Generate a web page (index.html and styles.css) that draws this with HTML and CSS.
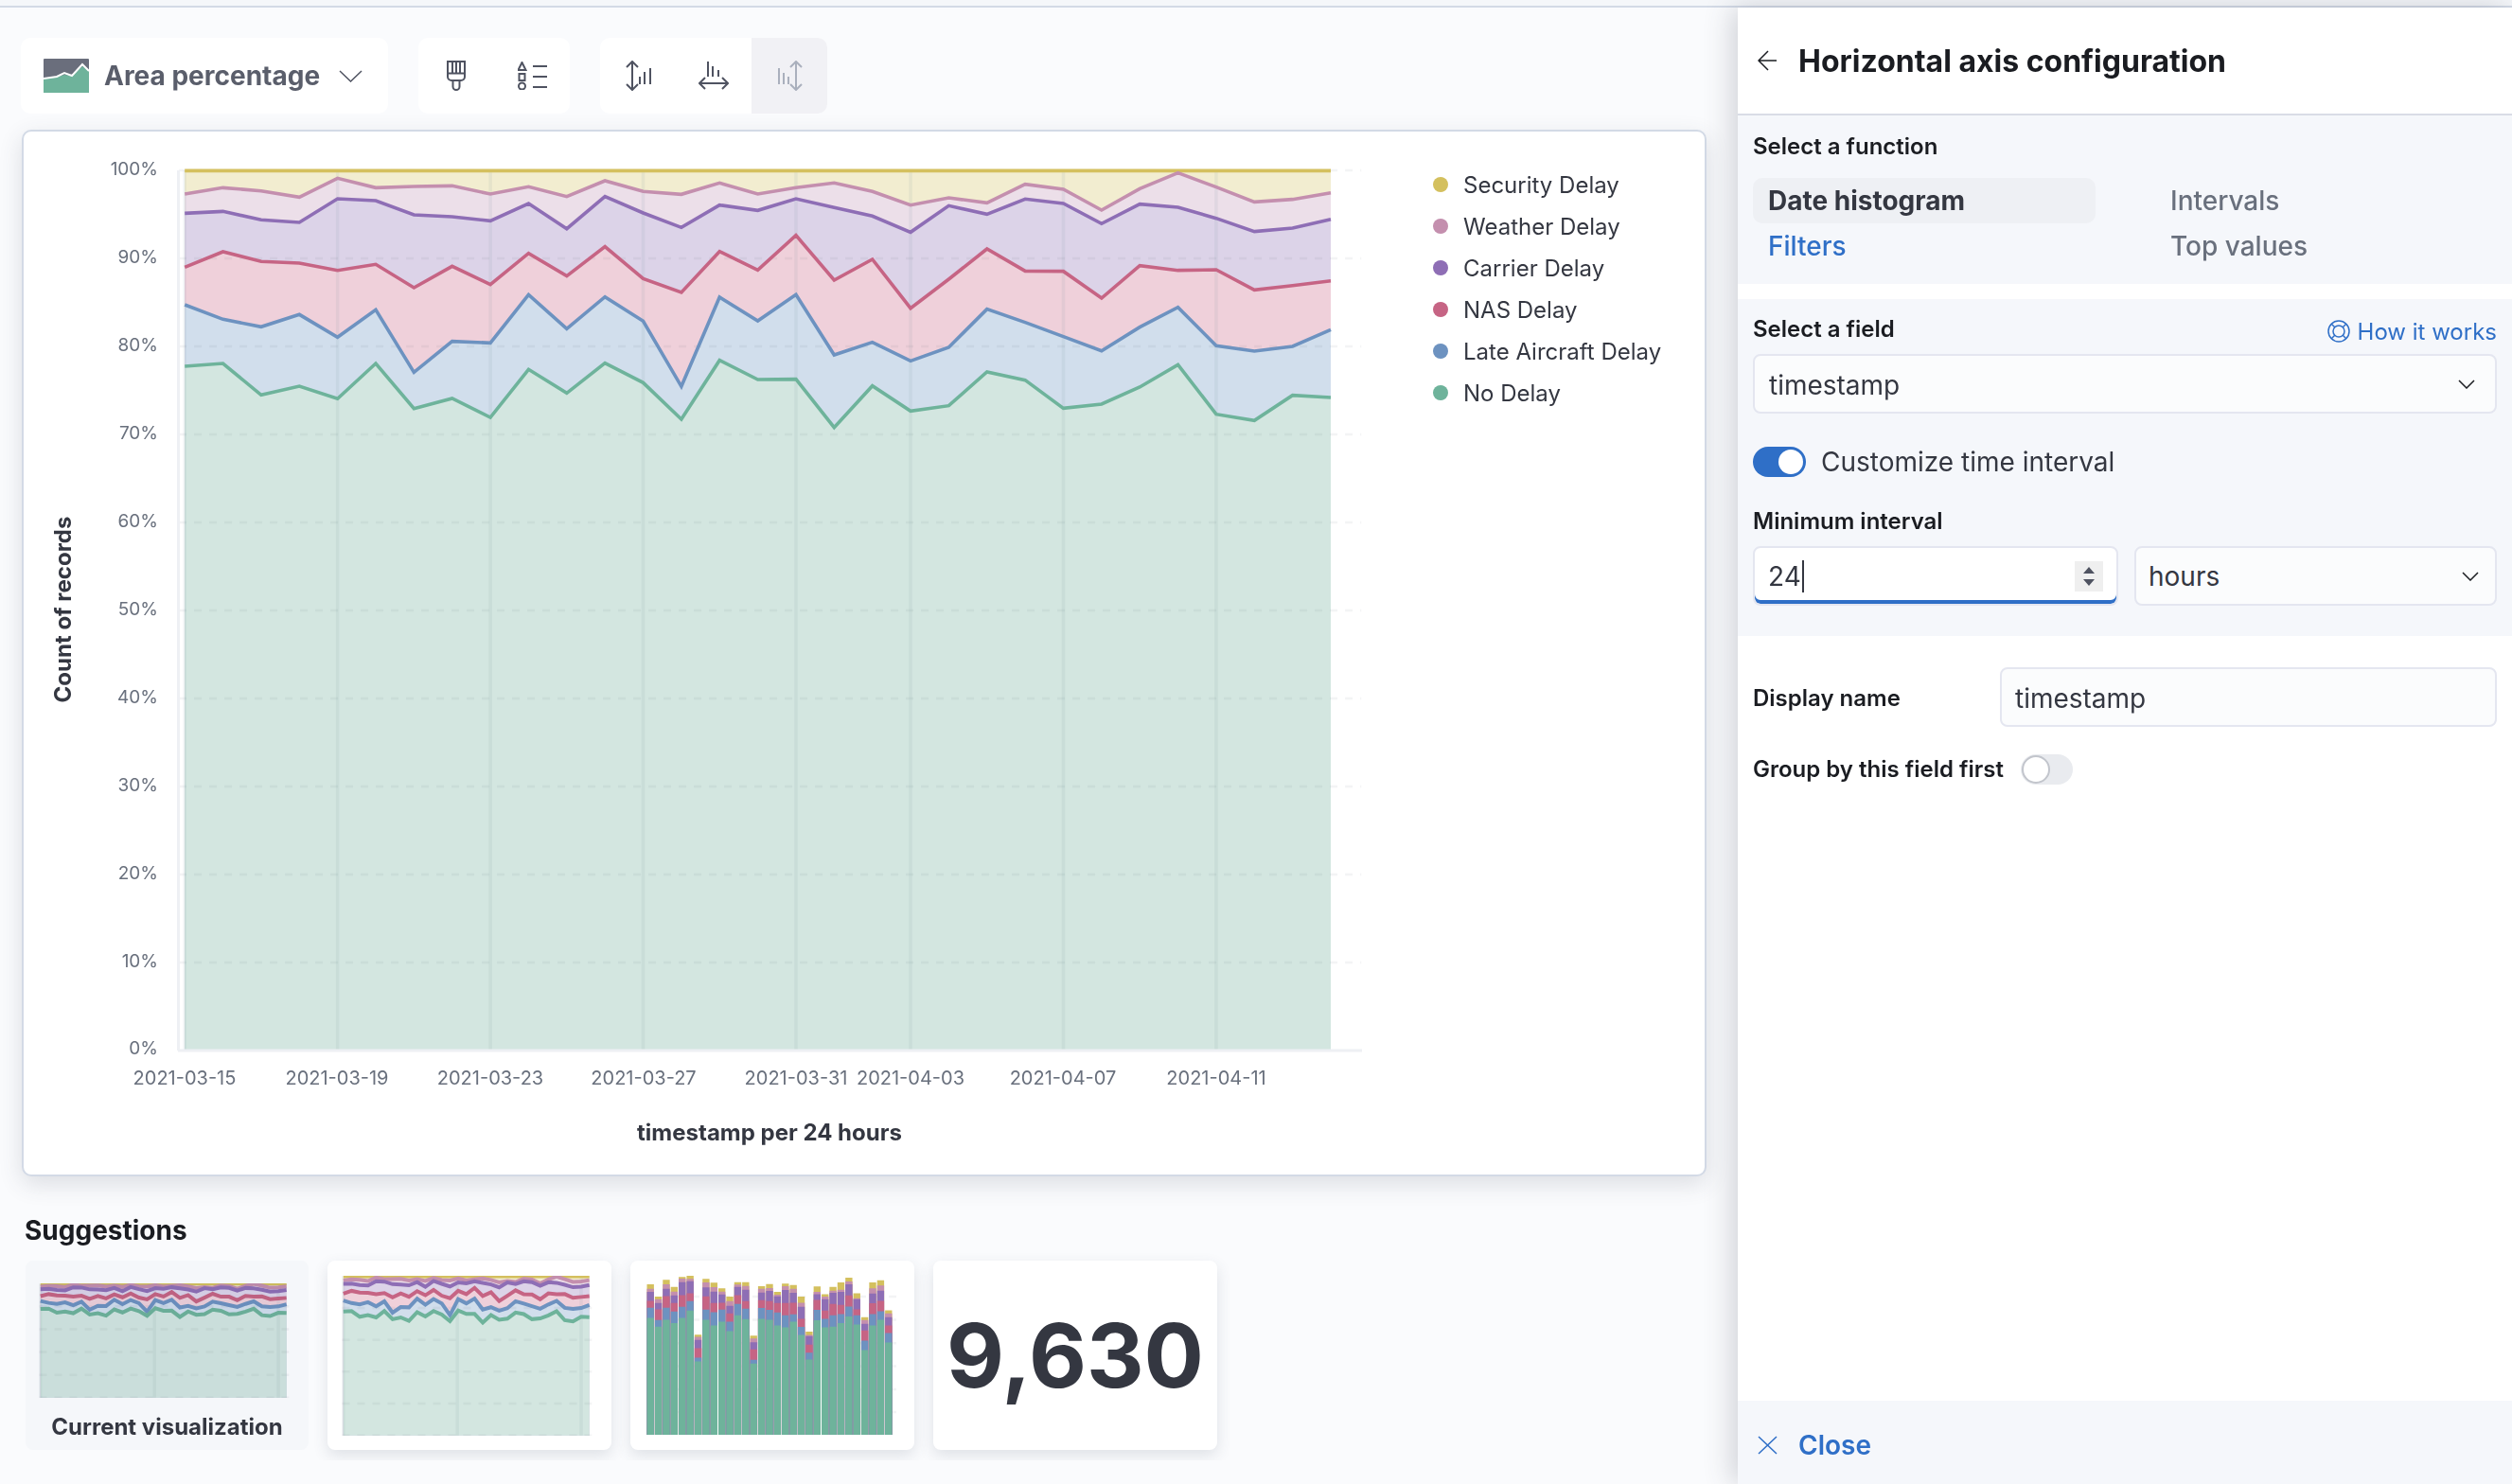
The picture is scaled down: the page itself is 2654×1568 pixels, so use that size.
FILE: index.html
```html
<!DOCTYPE html>
<html lang="en">
<head>
<meta charset="utf-8">
<title>Horizontal axis configuration</title>
<link rel="stylesheet" href="styles.css">
</head>
<body>
<svg class="defs" width="0" height="0" aria-hidden="true">
  <symbol id="fills" viewBox="187 178 1253 934" preserveAspectRatio="none">
    <g transform="translate(195.2 160) scale(40.36 0.33333)">
      <polygon class="a-yellow" points="0,60 30,60 30,2850 0,2850"/>
      <polygon class="a-pink" points="0,135 1,115 2,125 3,145 4,85 5,115 6,111 7,109 8,135 9,112 10,143 11,93 12,127 13,136 14,100 15,135 16,115 17,100 18,127 19,170 20,147 21,163 22,104 23,120 24,186 25,118 26,68 27,113 28,160 29,152 30,131 30,2850 0,2850"/>
      <polygon class="a-purple" points="0,196 1,190 2,217 3,225 4,150 5,156 6,201 7,207 8,220 9,165 10,245 11,143 12,195 13,241 14,170 15,187 16,150 17,178 18,205 19,256 20,172 21,199 22,151 23,165 24,229 25,167 26,177 27,212 28,254 29,243 30,215 30,2850 0,2850"/>
      <polygon class="a-red" points="0,367 1,318 2,349 3,354 4,377 5,358 6,432 7,364 8,422 9,323 10,395 11,302 12,403 13,447 14,317 15,376 16,266 17,408 18,342 19,497 20,405 21,309 22,379 23,380 24,465 25,362 26,377 27,375 28,439 29,425 30,410 30,2850 0,2850"/>
      <polygon class="a-blue" points="0,486 1,532 2,556 3,517 4,589 5,502 6,700 7,602 8,607 9,454 10,562 11,461 12,538 13,745 14,462 15,537 16,454 17,645 18,605 19,664 20,621 21,500 22,542 23,587 24,632 25,557 26,494 27,616 28,633 29,618 30,565 30,2850 0,2850"/>
      <polygon class="a-green" points="0,681 1,672 2,772 3,744 4,784 5,672 6,815 7,783 8,843 9,691 10,766 11,671 12,733 13,849 14,662 15,723 16,722 17,875 18,743 19,823 20,806 21,699 22,725 23,814 24,801 25,747 26,676 27,833 28,853 29,773 30,780 30,2850 0,2850"/>
    </g>
  </symbol>
  <symbol id="grid-main" viewBox="187 178 1253 934" preserveAspectRatio="none">
    <g transform="translate(195.2 160) scale(40.36 0.33333)">
      <path class="grid" d="M-.15 60H30.8M-.15 339H30.8M-.15 618H30.8M-.15 897H30.8M-.15 1176H30.8M-.15 1455H30.8M-.15 1734H30.8M-.15 2013H30.8M-.15 2292H30.8M-.15 2571H30.8"/>
      <path class="tick" d="M0 60V2850M4 60V2850M8 60V2850M12 60V2850M16 60V2850M19 60V2850M23 60V2850M27 60V2850"/>
    </g>
  </symbol>
  <symbol id="grid-mini" viewBox="187 178 1253 934" preserveAspectRatio="none">
    <g transform="translate(195.2 160) scale(40.36 0.33333)">
      <path class="grid" d="M-.15 618H30.3M-.15 1176H30.3M-.15 1734H30.3M-.15 2292H30.3M-.15 2850H30.3"/>
      <path class="tick" d="M0 60V2850M13.900 60V2850M29 60V2850"/>
    </g>
  </symbol>
  <symbol id="lines" viewBox="187 178 1253 934" preserveAspectRatio="none">
    <g transform="translate(195.2 160) scale(40.36 0.33333)">
      <polyline class="line l-yellow" points="0,61 30,61"/>
      <polyline class="line l-pink" points="0,135 1,115 2,125 3,145 4,85 5,115 6,111 7,109 8,135 9,112 10,143 11,93 12,127 13,136 14,100 15,135 16,115 17,100 18,127 19,170 20,147 21,163 22,104 23,120 24,186 25,118 26,68 27,113 28,160 29,152 30,131"/>
      <polyline class="line l-purple" points="0,196 1,190 2,217 3,225 4,150 5,156 6,201 7,207 8,220 9,165 10,245 11,143 12,195 13,241 14,170 15,187 16,150 17,178 18,205 19,256 20,172 21,199 22,151 23,165 24,229 25,167 26,177 27,212 28,254 29,243 30,215"/>
      <polyline class="line l-red" points="0,367 1,318 2,349 3,354 4,377 5,358 6,432 7,364 8,422 9,323 10,395 11,302 12,403 13,447 14,317 15,376 16,266 17,408 18,342 19,497 20,405 21,309 22,379 23,380 24,465 25,362 26,377 27,375 28,439 29,425 30,410"/>
      <polyline class="line l-blue" points="0,486 1,532 2,556 3,517 4,589 5,502 6,700 7,602 8,607 9,454 10,562 11,461 12,538 13,745 14,462 15,537 16,454 17,645 18,605 19,664 20,621 21,500 22,542 23,587 24,632 25,557 26,494 27,616 28,633 29,618 30,565"/>
      <polyline class="line l-green" points="0,681 1,672 2,772 3,744 4,784 5,672 6,815 7,783 8,843 9,691 10,766 11,671 12,733 13,849 14,662 15,723 16,722 17,875 18,743 19,823 20,806 21,699 22,725 23,814 24,801 25,747 26,676 27,833 28,853 29,773 30,780"/>
    </g>
  </symbol>
  <symbol id="chev" viewBox="0 0 18 10"><path class="ic" d="M1 1l8 8 8-8"/></symbol>
</svg>

<div class="topbar"></div>
<div class="app">
  <main class="left">
    <div class="toolbar">
      <div class="chip chip-type">
        <svg class="type-icon" width="48" height="36" viewBox="0 0 48 36">
          <rect width="48" height="36" rx="1" fill="#6a6e7c"/>
          <polygon points="0,21 14,19 22,17 30,18 41,8 48,13 48,36 0,36" fill="#6eb39b"/>
          <polyline points="0,21 14,19 22,15 30,18 41,6 48,13" fill="none" stroke="#fff" stroke-width="2"/>
        </svg>
        <span class="type-label">Area percentage</span>
        <svg class="type-chev" width="25" height="13" viewBox="0 0 25 13"><path d="M1 1l11.500 11L24 1" fill="none" stroke="#4f5361" stroke-width="1.500"/></svg>
      </div>
      <div class="chip">
        <div class="tool">
          <svg width="20" height="32" viewBox="0 0 20 32"><path class="tool-ic" d="M1 1h18v16a4 4 0 0 1-4 4H5a4 4 0 0 1-4-4zM1 13.500h18M6 1v12M10 1v12M14 1v12M6.500 21v6.500a3.500 3.500 0 0 0 7 0V21"/></svg>
        </div>
        <div class="tool">
          <svg width="31" height="30" viewBox="0 0 31 30"><path class="tool-ic" d="M4.500 1L8.500 9h-8zM1.500 13h6v7h-6zM16 5h15M16 16h15M16 27h15"/><ellipse class="tool-ic" cx="4.500" cy="26" rx="3.500" ry="3.500"/></svg>
        </div>
      </div>
      <div class="chip">
        <div class="tool">
          <svg width="27" height="32" viewBox="0 0 27 32"><path class="tool-ic" d="M7 1v30M1 7l6-6 6 6M1 25l6 6 6-6M15 17v8M20 12v13M26 8v17"/></svg>
        </div>
        <div class="tool">
          <svg width="32" height="30" viewBox="0 0 32 30"><path class="tool-ic" d="M10 0v16M15 5v11M21 9v7M1 23h30M7 17l-6 6 6 6M25 17l6 6-6 6"/></svg>
        </div>
        <div class="tool tool-off">
          <svg width="27" height="32" viewBox="0 0 27 32"><path class="tool-ic" d="M20 1v30M14 7l6-6 6 6M14 25l6 6 6-6M2 8v17M7 13v12M12 17v8"/></svg>
        </div>
      </div>
    </div>

    <section class="card">
      <svg class="chart" width="1465" height="1101" viewBox="25 139 1465 1101">
        <use href="#fills" x="187" y="178" width="1253" height="934"/>
        <use href="#grid-main" x="187" y="178" width="1253" height="934"/>
        <use href="#lines" x="187" y="178" width="1253" height="934"/>
        <path class="axis" d="M188.500 180V1110M188 1110H1439"/>
        <g class="ylab">
          <text x="167" y="178.500">100%</text><text x="167" y="271.500">90%</text><text x="167" y="364.500">80%</text><text x="167" y="457.500">70%</text><text x="167" y="550.500">60%</text><text x="167" y="643.500">50%</text><text x="167" y="736.500">40%</text><text x="167" y="829.500">30%</text><text x="167" y="922.500">20%</text><text x="167" y="1015.500">10%</text><text x="167" y="1107">0%</text>
        </g>
        <g class="xlab">
          <text x="195" y="1139">2021-03-15</text><text x="356" y="1139">2021-03-19</text><text x="518" y="1139">2021-03-23</text><text x="680" y="1139">2021-03-27</text><text x="841" y="1139">2021-03-31</text><text x="962" y="1139">2021-04-03</text><text x="1123" y="1139">2021-04-07</text><text x="1285" y="1139">2021-04-11</text>
        </g>
        <text class="axis-title" x="813" y="1196">timestamp per 24 hours</text>
        <text class="axis-title" x="66" y="644" transform="rotate(-90 66 644)">Count of records</text>
      </svg>
      <ul class="legend">
        <li><i class="dot d-yellow"></i>Security Delay</li>
        <li><i class="dot d-pink"></i>Weather Delay</li>
        <li><i class="dot d-purple"></i>Carrier Delay</li>
        <li><i class="dot d-red"></i>NAS Delay</li>
        <li><i class="dot d-blue"></i>Late Aircraft Delay</li>
        <li><i class="dot d-green"></i>No Delay</li>
      </ul>
    </section>

    <h2 class="sug-title">Suggestions</h2>
    <div class="sug-row">
      <div class="sug sug-current">
        <svg class="mini mini-a" width="269" height="121" viewBox="0 0 269 121" preserveAspectRatio="none"><use href="#fills" width="269" height="121"/><use href="#grid-mini" width="269" height="121"/><use href="#lines" width="269" height="121"/></svg>
        <div class="sug-cap">Current visualization</div>
      </div>
      <div class="sug">
        <svg class="mini mini-b" width="269" height="169" viewBox="0 0 269 169" preserveAspectRatio="none"><use href="#fills" width="269" height="169"/><use href="#grid-mini" width="269" height="169"/><use href="#lines" width="269" height="169"/></svg>
      </div>
      <div class="sug">
        <svg class="mini mini-c" width="260" height="171" viewBox="0 0 31 512" preserveAspectRatio="none">
          <path class="grid" d="M0 75H31.600M0 148H31.600M0 222H31.600M0 295H31.600M0 368H31.600M0 440H31.600"/>
          <path class="bar s-yellow" d="M.5 36V512M1.500 75V512M2.500 22V512M3.500 44V512M4.500 13V512M5.500 9V512M6.500 195V512M7.500 19V512M8.500 31V512M9.500 49V512M10.500 75V512M11.500 29V512M12.500 29V512M13.500 198V512M14.500 42V512M15.500 35V512M16.500 60V512M17.500 34V512M18.500 38V512M19.500 75V512M20.500 186V512M21.500 43V512M22.500 67V512M23.500 44V512M24.500 30V512M25.500 15V512M26.500 64V512M27.500 140V512M28.500 30V512M29.500 23V512M30.500 118V512"/>
          <path class="bar s-pink" d="M.5 50V512M1.500 83V512M2.500 36V512M3.500 59V512M4.500 18V512M5.500 19V512M6.500 202V512M7.500 30V512M8.500 45V512M9.500 59V512M10.500 89V512M11.500 37V512M12.500 41V512M13.500 207V512M14.500 50V512M15.500 48V512M16.500 69V512M17.500 42V512M18.500 50V512M19.500 94V512M20.500 196V512M21.500 60V512M22.500 75V512M23.500 56V512M24.500 53V512M25.500 27V512M26.500 80V512M27.500 149V512M28.500 49V512M29.500 40V512M30.500 128V512"/>
          <path class="bar s-purple" d="M.5 60V512M1.500 95V512M2.500 50V512M3.500 71V512M4.500 29V512M5.500 26V512M6.500 212V512M7.500 46V512M8.500 59V512M9.500 68V512M10.500 104V512M11.500 44V512M12.500 53V512M13.500 219V512M14.500 62V512M15.500 57V512M16.500 74V512M17.500 54V512M18.500 63V512M19.500 107V512M20.500 200V512M21.500 67V512M22.500 83V512M23.500 63V512M24.500 60V512M25.500 36V512M26.500 83V512M27.500 161V512M28.500 65V512M29.500 56V512M30.500 140V512"/>
          <path class="bar s-red" d="M.5 88V512M1.500 115V512M2.500 73V512M3.500 95V512M4.500 70V512M5.500 64V512M6.500 238V512M7.500 74V512M8.500 95V512M9.500 94V512M10.500 128V512M11.500 70V512M12.500 89V512M13.500 242V512M14.500 86V512M15.500 89V512M16.500 95V512M17.500 95V512M18.500 94V512M19.500 145V512M20.500 227V512M21.500 85V512M22.500 119V512M23.500 98V512M24.500 101V512M25.500 71V512M26.500 115V512M27.500 182V512M28.500 96V512M29.500 88V512M30.500 166V512"/>
          <path class="bar s-blue" d="M.5 110V512M1.500 149V512M2.500 110V512M3.500 122V512M4.500 107V512M5.500 89V512M6.500 268V512M7.500 116V512M8.500 124V512M9.500 116V512M10.500 154V512M11.500 98V512M12.500 113V512M13.500 275V512M14.500 111V512M15.500 117V512M16.500 125V512M17.500 134V512M18.500 131V512M19.500 171V512M20.500 252V512M21.500 117V512M22.500 145V512M23.500 134V512M24.500 130V512M25.500 106V512M26.500 134V512M27.500 214V512M28.500 130V512M29.500 121V512M30.500 190V512"/>
          <path class="bar s-green" d="M.5 142V512M1.500 170V512M2.500 148V512M3.500 159V512M4.500 142V512M5.500 119V512M6.500 280V512M7.500 148V512M8.500 166V512M9.500 154V512M10.500 184V512M11.500 134V512M12.500 146V512M13.500 287V512M14.500 145V512M15.500 148V512M16.500 166V512M17.500 172V512M18.500 154V512M19.500 196V512M20.500 274V512M21.500 150V512M22.500 172V512M23.500 170V512M24.500 159V512M25.500 138V512M26.500 163V512M27.500 244V512M28.500 166V512M29.500 148V512M30.500 220V512"/>
        </svg>
      </div>
      <div class="sug sug-metric">9,630</div>
    </div>
  </main>

  <aside class="panel">
    <header class="panel-head">
      <svg class="ic-dark" width="20" height="22" viewBox="0 0 20 22"><path class="ic" d="M11 1L1 11l10 10M1 11h19"/></svg>
      <h1 class="panel-title">Horizontal axis configuration</h1>
    </header>

    <section class="sect sect-fn">
      <div class="label">Select a function</div>
      <div class="fn-grid">
        <div class="fn fn-on">Date histogram</div>
        <div class="fn fn-off">Intervals</div>
        <div class="fn fn-link">Filters</div>
        <div class="fn fn-off">Top values</div>
      </div>
    </section>

    <section class="sect sect-field">
      <div class="label-row">
        <div class="label">Select a field</div>
        <div class="how">
          <svg width="24" height="24" viewBox="0 0 24 24"><circle class="ic" cx="12" cy="12" r="11"/><circle class="ic" cx="12" cy="12" r="6"/><path class="ic" d="M4 4l4 4M20 4l-4 4M4 20l4-4M20 20l-4-4"/></svg>
          <span>How it works</span>
        </div>
      </div>
      <div class="input input-select input-field">
        <span>timestamp</span>
        <svg class="ic-dark" width="18" height="10"><use href="#chev"/></svg>
      </div>
      <div class="toggle-row">
        <div class="switch switch-on"><i></i></div>
        <span class="toggle-text">Customize time interval</span>
      </div>
      <div class="label label-min">Minimum interval</div>
      <div class="interval">
        <div class="input input-num">
          <span class="num">24</span><i class="caret"></i>
          <div class="spin">
            <svg width="14" height="24" viewBox="0 0 14 24"><path d="M7 2l6 7H1zM7 22l-6-7h12z" fill="#4f5361"/></svg>
          </div>
        </div>
        <div class="input input-select input-hours">
          <span>hours</span>
          <svg class="ic-dark" width="18" height="10"><use href="#chev"/></svg>
        </div>
      </div>
    </section>

    <div class="plain">
      <div class="row-name">
        <div class="label name-label">Display name</div>
        <div class="input input-name">timestamp</div>
      </div>
      <div class="row-group">
        <div class="label">Group by this field first</div>
        <div class="switch switch-off"><i></i></div>
      </div>
    </div>

    <footer class="panel-foot">
      <svg width="21" height="20" viewBox="0 0 21 20"><path class="ic" d="M1 1l19 18M20 1L1 19"/></svg>
      <span>Close</span>
    </footer>
  </aside>
</div>
</body>
</html>
```

FILE: styles.css
```css
* { box-sizing: border-box; }
html, body { margin: 0; padding: 0; }
body {
  width: 2654px;
  height: 1568px;
  overflow: hidden;
  background: #fafbfd;
  font-family: Inter, "Liberation Sans", sans-serif;
  color: #1a1c21;
}
.defs { position: absolute; }
.topbar { height: 8px; background: #f5f7fa; border-bottom: 2px solid #d3dae6; }
.app { display: flex; height: 1560px; }

/* left column */
.left { flex: 0 0 1836px; padding: 32px 0 0 22px; min-width: 0; }
.toolbar { display: flex; gap: 32px; }
.chip { display: flex; height: 80px; background: #fff; border-radius: 10px; overflow: hidden; }
.chip-type { width: 388px; align-items: center; padding-left: 24px; }
.type-icon { flex: none; }
.type-label { margin-left: 16px; font-size: 28px; font-weight: 700; color: #5a5e6b; white-space: nowrap; }
.type-chev { margin-left: 20px; flex: none; }
.tool { width: 80px; height: 80px; display: flex; align-items: center; justify-content: center; }
.tool-ic { fill: none; stroke: #4f5361; stroke-width: 2; }
.tool-off { background: #f1f1f5; }
.tool-off .tool-ic { stroke: #aab0bd; }

.card {
  display: flex;
  width: 1780px;
  height: 1106px;
  margin: 17px 0 0 1px;
  background: #fff;
  border: 2px solid #d3dae6;
  border-radius: 10px;
  box-shadow: 0 8px 24px rgba(60, 70, 90, .16);
}
.chart { flex: none; display: block; }
.grid { fill: none; stroke: rgba(105, 112, 125, .08); stroke-width: 2.500; stroke-dasharray: 8 8; vector-effect: non-scaling-stroke; }
.tick { fill: none; stroke: rgba(100, 130, 140, .09); stroke-width: 3.500; vector-effect: non-scaling-stroke; }
.axis { fill: none; stroke: #eef0f4; stroke-width: 3; }
.line { fill: none; stroke-width: var(--lw, 3.600); vector-effect: non-scaling-stroke; }
.mini { --lw: 4; }
.a-yellow { fill: #f2edd0; }
.a-pink { fill: #ecdfe9; }
.a-purple { fill: #dcd3e8; }
.a-red { fill: #efd0da; }
.a-blue { fill: #d1deec; }
.a-green { fill: #d3e6e0; }
.l-yellow { stroke: #d4c05e; }
.l-pink { stroke: #c48fae; }
.l-purple { stroke: #8e6eb5; }
.l-red { stroke: #c66484; }
.l-blue { stroke: #6d92c0; }
.l-green { stroke: #6eb39b; }
.ylab text { font-size: 19px; fill: #69707d; text-anchor: end; dominant-baseline: central; }
.xlab text { font-size: 20px; fill: #69707d; text-anchor: middle; dominant-baseline: central; }
.axis-title { font-size: 24px; font-weight: 700; fill: #343741; text-anchor: middle; dominant-baseline: central; }

.legend { list-style: none; margin: 0; padding: 34px 0 0 24px; }
.legend li { display: flex; align-items: center; height: 44px; font-size: 24px; color: #343741; white-space: nowrap; }
.dot { width: 16px; height: 16px; border-radius: 50%; margin-right: 16px; flex: none; }
.d-yellow { background: #d4c05e; }
.d-pink { background: #c48fae; }
.d-purple { background: #8e6eb5; }
.d-red { background: #c66484; }
.d-blue { background: #6d92c0; }
.d-green { background: #6eb39b; }

.sug-title { margin: 39px 0 0 4px; font-size: 28px; line-height: 36px; font-weight: 700; color: #1a1c21; }
.sug-row {
  display: flex;
  gap: 20px;
  margin: 4px 0 0 0;
  padding: 10px 20px 11px 5px;
  overflow: hidden;
}
.sug {
  flex: none;
  width: 300px;
  height: 200px;
  background: #fff;
  border-radius: 8px;
  box-shadow: 0 6px 16px rgba(60, 70, 90, .14);
  overflow: hidden;
}
.sug-current { width: 299px; background: #f5f7fa; box-shadow: none; }
.mini { display: block; overflow: visible; }
.mini-a { margin: 24px 0 0 14px; mix-blend-mode: multiply; }
.mini-b { margin: 16px 0 0 15px; }
.mini-c { margin: 13px 0 0 17px; }
.sug-cap { margin-top: 16px; font-size: 24px; line-height: 30px; font-weight: 700; color: #343741; text-align: center; }
.bar { fill: none; stroke-width: .88; }
.s-yellow { stroke: #d4c05e; }
.s-pink { stroke: #c48fae; }
.s-purple { stroke: #8e6eb5; }
.s-red { stroke: #c66484; }
.s-blue { stroke: #6d92c0; }
.s-green { stroke: #6eb39b; }
.sug-metric {
  display: flex;
  align-items: center;
  justify-content: center;
  font-size: 94px;
  font-weight: 700;
  color: #343741;
}

/* right panel */
.panel {
  position: relative;
  z-index: 2;
  flex: 0 0 818px;
  display: flex;
  flex-direction: column;
  background: #fff;
  box-shadow: -6px 0 28px rgba(60, 65, 80, .22);
}
.ic { fill: none; stroke: currentColor; stroke-width: 1.500; }
.panel-head {
  flex: none;
  display: flex;
  align-items: center;
  gap: 23px;
  height: 114px;
  padding-left: 21px;
  border-bottom: 2px solid #d9dce6;
}
.ic-dark { color: #1a1c21; flex: none; }
.panel-title { margin: 0; font-size: 32px; font-weight: 700; color: #1a1c21; white-space: nowrap; }
.sect { background: #f5f7fb; padding: 0 16px; }
.sect-fn { height: 178px; padding-top: 18px; }
.label { font-size: 24px; line-height: 30px; font-weight: 600; color: #1a1c21; white-space: nowrap; }
.fn-grid { display: grid; grid-template-columns: 362px 1fr; grid-auto-rows: 48px; column-gap: 62px; margin-top: 18px; }
.fn { display: flex; align-items: center; padding-left: 16px; font-size: 28px; font-weight: 500; border-radius: 10px; }
.fn-on { background: #eef0f4; font-weight: 700; color: #343741; }
.fn-off { color: #69707d; padding-left: 17px; }
.fn-link { color: #2f6fc7; }
.sect-field { margin-top: 16px; height: 356px; padding-top: 16px; }
.label-row { display: flex; justify-content: space-between; align-items: center; height: 32px; }
.how { display: flex; align-items: center; gap: 8px; font-size: 24px; color: #2f6fc7; padding-top: 4px; white-space: nowrap; }
.input {
  height: 63px;
  display: flex;
  align-items: center;
  background: #fbfcfd;
  border: 2px solid #e4e6f0;
  border-radius: 8px;
  padding-left: 14px;
  font-size: 28px;
  color: #343741;
}
.input-select { justify-content: space-between; padding-right: 21px; }
.input-field { margin-top: 10px; padding-left: 15px; padding-top: 2px; }
.input-field .ic-dark { margin-top: -2px; }
.toggle-row { display: flex; align-items: center; gap: 16px; height: 32px; margin-top: 35px; }
.switch { position: relative; flex: none; border-radius: 16px; height: 32px; }
.switch i { position: absolute; top: 3px; width: 26px; height: 26px; border-radius: 50%; background: #fff; }
.switch-on { width: 56px; background: #2f6fc7; }
.switch-on i { right: 3px; }
.switch-off { width: 55px; background: #e9ebef; }
.switch-off i { left: 1px; top: 1px; width: 30px; height: 30px; border: 2px solid #c2c5cc; }
.toggle-text { font-size: 28px; color: #343741; white-space: nowrap; }
.label-min { margin-top: 32px; }
.interval { display: flex; gap: 17px; margin-top: 11px; }
.input-num {
  width: 386px;
  background: #fff;
  box-shadow: inset 0 -4px 0 #2f6fc7;
}
.caret { width: 2px; height: 34px; background: #343741; margin-left: 1px; }
.spin {
  margin-left: auto;
  margin-right: 14px;
  width: 30px;
  height: 32px;
  background: #efefef;
  display: flex;
  align-items: center;
  justify-content: center;
}
.input-hours { flex: 1; padding-left: 13px; padding-right: 17px; }
.plain { padding: 33px 16px 0; }
.row-name { display: flex; align-items: center; }
.name-label { width: 261px; flex: none; padding-top: 2px; }
.input-name { flex: 1; padding-top: 2px; }
.row-group { display: flex; align-items: center; gap: 18px; margin-top: 29px; }
.panel-foot {
  flex: none;
  margin-top: auto;
  height: 88px;
  display: flex;
  align-items: center;
  gap: 22px;
  padding: 6px 0 0 21px;
  background: #f5f7fb;
  color: #2f6fc7;
  font-size: 28px;
  font-weight: 600;
}
```
